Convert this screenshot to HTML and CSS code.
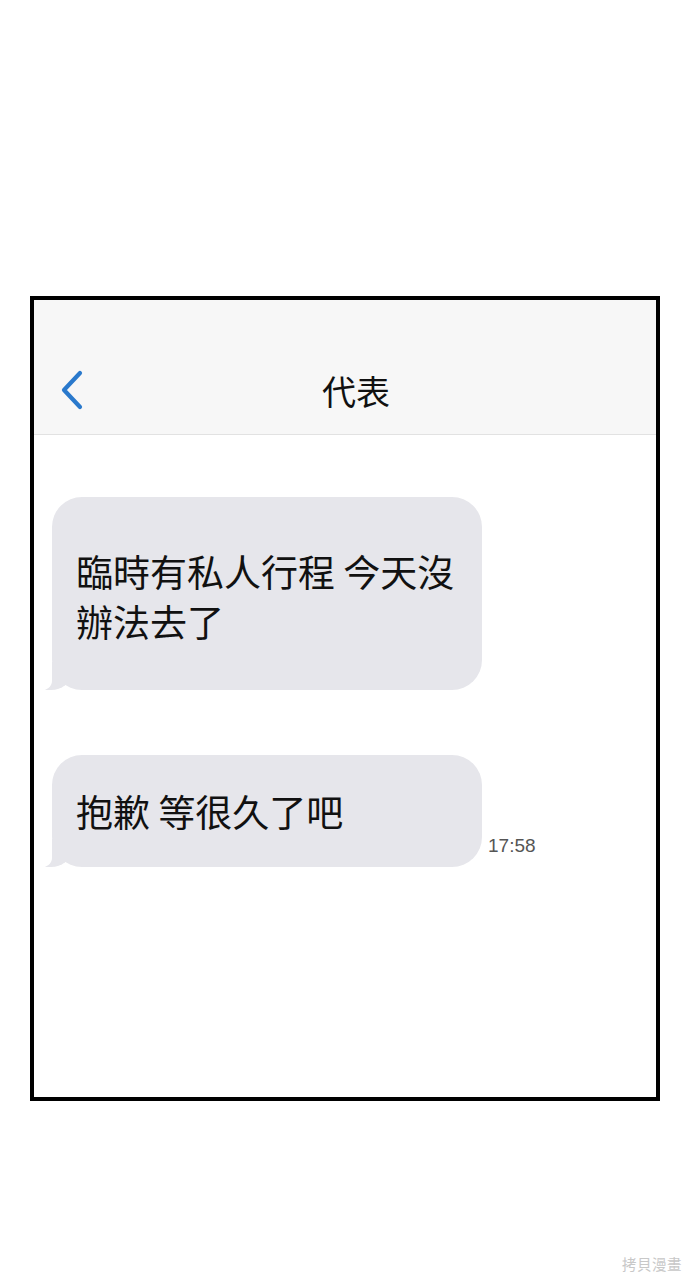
FILE: index.html
```html
<!DOCTYPE html>
<html lang="zh-Hant">
<head>
<meta charset="UTF-8">
<meta name="viewport" content="width=device-width, initial-scale=1.0">
<title>代表</title>
<link rel="stylesheet" href="styles.css">
</head>
<body>
<div class="phone">
    <div class="nav">
        <div class="nav-row">
            <svg class="back" width="24" height="40" viewBox="0 0 24 40">
                <polyline points="20,3 4,20 20,37" fill="none" stroke="#2a79cc" stroke-width="4.2" stroke-linecap="round" stroke-linejoin="round"/>
            </svg>
            <h2 class="title">代表</h2>
        </div>
    </div>
    <div class="messages">
        <div class="msg">
            <div class="bubble">臨時有私人行程 今天沒<br>辦法去了</div>
        </div>
        <div class="msg">
            <div class="bubble">抱歉 等很久了吧</div>
            <span class="time">17:58</span>
        </div>
    </div>
</div>
<div class="watermark">拷貝漫畫</div>
</body>
</html>
```

FILE: styles.css
```css
body {
    margin: 0;
    background-color: #fff;
    font-family: "Noto Sans CJK TC", "Noto Sans", sans-serif;
}
.phone {
    box-sizing: border-box;
    width: 630px;
    height: 805px;
    margin: 296px 0 0 30px;
    border: 4px solid #000;
    background-color: #fff;
}
.nav {
    background-color: #f7f7f7;
    border-bottom: 1px solid #e2e2e2;
    padding: 66px 0 18px;
}
.nav-row {
    position: relative;
    height: 50px;
    display: flex;
    align-items: center;
    justify-content: center;
}
.back {
    position: absolute;
    left: 26px;
    top: 4px;
}
.title {
    margin: 0 0 0 22px;
    font-size: 34px;
    font-weight: normal;
    color: #111;
    line-height: 50px;
}
.messages {
    padding: 62px 0 0 18px;
    display: flex;
    flex-direction: column;
    gap: 65px;
}
.msg {
    display: flex;
    align-items: flex-end;
}
.bubble {
    position: relative;
    box-sizing: border-box;
    width: 430px;
    padding: 49px 16px 44px 24px;
    background-color: #e6e6eb;
    border-radius: 30px;
    font-size: 37px;
    line-height: 50px;
    color: #111;
}
.msg:last-child .bubble {
    padding-top: 31px;
    padding-bottom: 31px;
}
.bubble::before {
    content: "";
    position: absolute;
    left: -7px;
    bottom: 0;
    width: 26px;
    height: 28px;
    background-color: #e6e6eb;
    border-bottom-right-radius: 20px 16px;
}
.bubble::after {
    content: "";
    position: absolute;
    left: -14px;
    bottom: -1px;
    width: 14px;
    height: 30px;
    background-color: #fff;
    border-bottom-right-radius: 12px 10px;
}
.time {
    margin: 0 0 10px 6px;
    font-family: "Liberation Sans", Arial, sans-serif;
    font-size: 19px;
    color: #555;
}
.watermark {
    margin: 152px 8px 0 0;
    text-align: right;
    font-size: 14.5px;
    color: #c8c8c8;
    letter-spacing: 0.5px;
}
```
